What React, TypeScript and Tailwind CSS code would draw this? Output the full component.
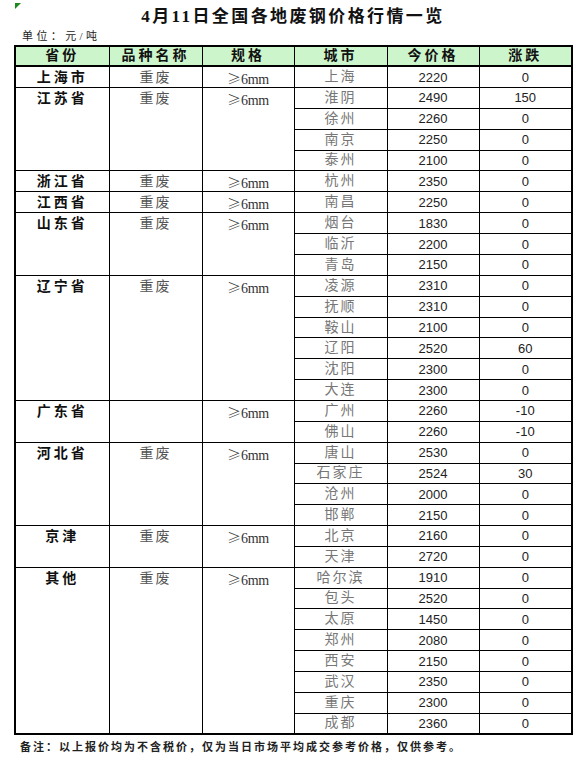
import React from "react";

type Group = {
  prov: string;
  kind: string;
  rows: [string, string, string][];
};

const groups: Group[] = [
  { prov: "上海市", kind: "重废", rows: [["上海", "2220", "0"]] },
  {
    prov: "江苏省",
    kind: "重废",
    rows: [
      ["淮阴", "2490", "150"],
      ["徐州", "2260", "0"],
      ["南京", "2250", "0"],
      ["泰州", "2100", "0"],
    ],
  },
  { prov: "浙江省", kind: "重废", rows: [["杭州", "2350", "0"]] },
  { prov: "江西省", kind: "重废", rows: [["南昌", "2250", "0"]] },
  {
    prov: "山东省",
    kind: "重废",
    rows: [
      ["烟台", "1830", "0"],
      ["临沂", "2200", "0"],
      ["青岛", "2150", "0"],
    ],
  },
  {
    prov: "辽宁省",
    kind: "重废",
    rows: [
      ["凌源", "2310", "0"],
      ["抚顺", "2310", "0"],
      ["鞍山", "2100", "0"],
      ["辽阳", "2520", "60"],
      ["沈阳", "2300", "0"],
      ["大连", "2300", "0"],
    ],
  },
  {
    prov: "广东省",
    kind: "",
    rows: [
      ["广州", "2260", "-10"],
      ["佛山", "2260", "-10"],
    ],
  },
  {
    prov: "河北省",
    kind: "重废",
    rows: [
      ["唐山", "2530", "0"],
      ["石家庄", "2524", "30"],
      ["沧州", "2000", "0"],
      ["邯郸", "2150", "0"],
    ],
  },
  {
    prov: "京津",
    kind: "重废",
    rows: [
      ["北京", "2160", "0"],
      ["天津", "2720", "0"],
    ],
  },
  {
    prov: "其他",
    kind: "重废",
    rows: [
      ["哈尔滨", "1910", "0"],
      ["包头", "2520", "0"],
      ["太原", "1450", "0"],
      ["郑州", "2080", "0"],
      ["西安", "2150", "0"],
      ["武汉", "2350", "0"],
      ["重庆", "2300", "0"],
      ["成都", "2360", "0"],
    ],
  },
];

const serif = "font-['Liberation_Serif','Noto_Sans_CJK_SC',serif]";
const sans = "font-['Liberation_Sans','Noto_Sans_CJK_SC',sans-serif]";
const cell = "border border-black text-center p-0 leading-none";

export default function App() {
  return (
    <div className="relative w-[578px] h-[767px] bg-white overflow-hidden">
      {/* excel corner marker */}
      <div className="absolute left-[15px] top-[3px] w-0 h-0 border-t-[6px] border-t-[#1e8a1e] border-r-[6px] border-r-transparent" />

      <div className="pt-[5px]">
        <h1
          className={`${serif} text-[17px] font-bold text-center tracking-[2.4px] text-[#111] h-[24px] leading-[24px] pl-[8px]`}
        >
          4月11日全国各地废钢价格行情一览
        </h1>
        <div className={`${serif} text-[11px] text-[#222] pl-[22px] tracking-[3.4px] h-[16px] leading-[14px]`}>
          单位：元/吨
        </div>

        <table className="ml-[14px] w-[557px] table-fixed border-collapse border-2 border-black text-[13px]">
          <colgroup>
            <col className="w-[94px]" />
            <col className="w-[93px]" />
            <col className="w-[92px]" />
            <col className="w-[93px]" />
            <col className="w-[92px]" />
            <col className="w-[93px]" />
          </colgroup>
          <thead>
            <tr className="h-[20px] bg-[#ccf5cc]">
              {["省份", "品种名称", "规格", "城市", "今价格", "涨跌"].map((h) => (
                <th
                  key={h}
                  className={`${cell} ${serif} font-bold text-[14px] tracking-[3px] text-[#111] border-b-2`}
                >
                  {h}
                </th>
              ))}
            </tr>
          </thead>
          <tbody>
            {groups.map((g) =>
              g.rows.map((r, i) => (
                <tr key={g.prov + r[0]} className="h-[20.85px]">
                  {i === 0 && (
                    <>
                      <td
                        rowSpan={g.rows.length}
                        className={`${cell} ${serif} align-top pt-[4px] font-bold text-[14px] tracking-[3px] text-[#111]`}
                      >
                        {g.prov}
                      </td>
                      <td
                        rowSpan={g.rows.length}
                        className={`${cell} ${serif} align-top pt-[4px] text-[14px] tracking-[2px] text-[#555]`}
                      >
                        {g.kind}
                      </td>
                      <td
                        rowSpan={g.rows.length}
                        className={`${cell} ${serif} align-top pt-[4px] text-[14px] text-[#333]`}
                      >
                        <span className="font-['Noto_Sans_CJK_SC',sans-serif] font-light text-[14px]">≥</span>
                        <span className="tracking-[-0.3px]">6mm</span>
                      </td>
                    </>
                  )}
                  <td className={`${cell} ${serif} text-[14px] tracking-[2px] text-[#777]`}>{r[0]}</td>
                  <td className={`${cell} ${sans} text-[13px] text-[#222]`}>{r[1]}</td>
                  <td className={`${cell} ${sans} text-[13px] text-[#222]`}>{r[2]}</td>
                </tr>
              ))
            )}
          </tbody>
        </table>

        <div className={`${serif} text-[11px] font-bold text-[#222] pl-[20px] pt-[4px] tracking-[2px]`}>
          备注：以上报价均为不含税价，仅为当日市场平均成交参考价格，仅供参考。
        </div>
      </div>
    </div>
  );
}
